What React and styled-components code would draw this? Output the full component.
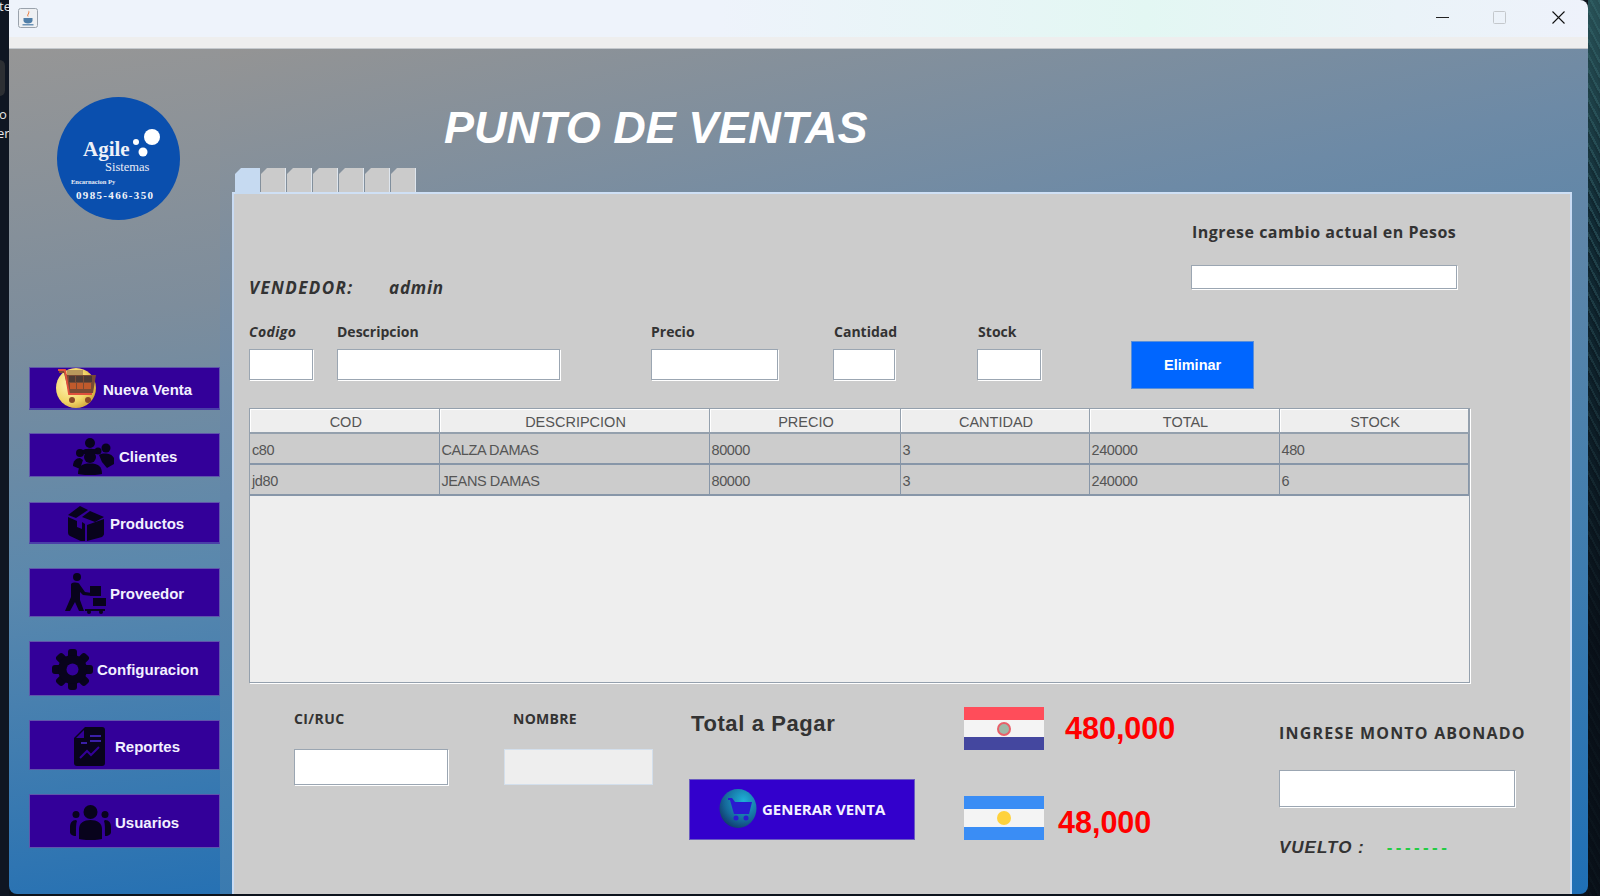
import React from "react";
import styled, { createGlobalStyle } from "styled-components";

const GlobalStyle = createGlobalStyle`
  html, body {
    margin: 0;
    padding: 0;
    background: #0d1620;
    overflow: hidden;
  }
  * {
    box-sizing: border-box;
  }
`;

const Desktop = styled.div`
  display: flex;
  width: 1600px;
  height: 896px;
  overflow: hidden;
  background: #0c131c;
`;

const LeftEdge = styled.div`
  position: relative;
  width: 9px;
  height: 896px;
  overflow: hidden;
  background: #0f1622;
  font-family: "Open Sans", sans-serif;
  font-size: 13px;
  color: #e8e8e8;
`;

const EdgeText = styled.span`
  position: absolute;
  left: ${(p) => p.$left}px;
  top: ${(p) => p.$top}px;
  line-height: 16px;
`;

const EdgePill = styled.div`
  position: absolute;
  left: -6px;
  top: 60px;
  width: 11px;
  height: 36px;
  border-radius: 6px;
  background: #2c2f33;
`;

const RightEdge = styled.div`
  width: 12px;
  height: 896px;
  background:
    linear-gradient(180deg, rgba(48, 96, 100, 0.75) 0, rgba(20, 50, 60, 0.4) 220px, rgba(8, 14, 22, 0.9) 640px),
    repeating-linear-gradient(62deg, #0a1a22 0 2px, #2a5058 2px 4px, #0f2630 4px 7px),
    repeating-linear-gradient(-48deg, #08141c 0 3px, #1f3f48 3px 5px);
`;

const Window = styled.div`
  display: flex;
  flex-direction: column;
  width: 1579px;
  height: 894px;
  overflow: hidden;
  border-radius: 0 8px 8px 8px;
`;

const TitleBar = styled.div`
  display: flex;
  align-items: center;
  justify-content: space-between;
  height: 37px;
  padding: 0 0 2px 9px;
  background: linear-gradient(90deg, #eef3fb 0%, #eef3fb 45%, #e3f7f3 72%, #eaf3f8 88%, #eef2fb 100%);
`;

const WindowControls = styled.div`
  display: flex;
  align-items: center;
  padding-right: 23px;
`;

const ControlSlot = styled.span`
  display: flex;
  margin-left: ${(p) => p.$ml}px;
`;

const MenuStrip = styled.div`
  height: 12px;
  background: #eeeeee;
  border-bottom: 1px solid #c4c8cc;
`;

const Body = styled.div`
  display: flex;
  flex: 1;
  min-height: 0;
`;

const Sidebar = styled.aside`
  display: flex;
  flex-direction: column;
  width: 211px;
  padding: 48px 0 0 20px;
  background: linear-gradient(172deg, #969696 0%, #7d8d9c 32%, #5a88ad 62%, #2671b3 100%);
`;

const LogoWrap = styled.div`
  width: 123px;
  height: 123px;
  margin-left: 28px;
`;

const SideButton = styled.div`
  display: flex;
  align-items: center;
  flex-shrink: 0;
  width: 191px;
  height: ${(p) => p.$h}px;
  margin-top: ${(p) => p.$mt}px;
  padding: 2px 0 0 ${(p) => p.$pl}px;
  gap: ${(p) => p.$gap}px;
  background: #330099;
  border: 1px solid #5f55ab;
  border-bottom: ${(p) => (p.$underline ? "2px solid #4a3fa8" : "1px solid #5f55ab")};
  color: #f2f0ff;
  font-family: "Liberation Sans", sans-serif;
  font-size: 15px;
  font-weight: 700;
  white-space: nowrap;
`;

const Content = styled.main`
  display: flex;
  flex: 1;
  flex-direction: column;
  min-width: 0;
  background: linear-gradient(168deg, #949494 0%, #6d8aa6 30%, #4880ad 62%, #1f6fb5 100%);
`;

const AppTitle = styled.h1`
  height: 119px;
  margin: 0;
  padding: 54px 0 0 224px;
  color: #ffffff;
  font-family: "Liberation Sans", sans-serif;
  font-size: 45px;
  font-style: italic;
  font-weight: 700;
  line-height: 50px;
`;

const TabStrip = styled.div`
  display: flex;
  gap: 1px;
  padding-left: 15px;
`;

const Tab = styled.div`
  position: relative;
  z-index: 1;
  width: 25px;
  height: ${(p) => (p.$active ? 26 : 24)}px;
  margin-bottom: ${(p) => (p.$active ? -2 : 0)}px;
  background: ${(p) => (p.$active ? "#c6daf1" : "#cbcbcb")};
  border-right: 1px solid ${(p) => (p.$active ? "#c6daf1" : "#dfe6ee")};
  clip-path: polygon(6px 0, 100% 0, 100% 100%, 0 100%, 0 6px);
`;

const TabPanel = styled.section`
  display: flex;
  flex: 1;
  flex-direction: column;
  width: 1340px;
  margin-left: 12px;
  padding-left: 15px;
  background: #cccccc;
  border-top: 2px solid #cfe0f5;
  border-left: 2px solid #c9dbf3;
  border-right: 2px solid #c9dbf3;
`;

const TopRow = styled.div`
  display: flex;
  align-items: flex-end;
  height: 78px;
  margin-top: 28px;
`;

const SellerLabel = styled.span`
  width: ${(p) => p.$w}px;
  color: #333333;
  font-family: "Open Sans", sans-serif;
  font-size: 17px;
  font-style: italic;
  font-weight: 700;
  letter-spacing: ${(p) => p.$spacing}px;
  line-height: 24px;
`;

const RateBlock = styled.div`
  display: flex;
  flex-direction: column;
  align-self: flex-start;
  width: 266px;
  margin-left: 802px;
`;

const RateLabel = styled.label`
  height: 20px;
  padding-left: 1px;
  color: #333333;
  font-family: "Open Sans", sans-serif;
  font-size: 16px;
  font-weight: 700;
  letter-spacing: 0.5px;
  line-height: 20px;
  white-space: nowrap;
`;

const TextInput = styled.input`
  display: block;
  width: ${(p) => p.$w}px;
  height: ${(p) => p.$h}px;
  margin-top: ${(p) => p.$mt}px;
  padding: 0 4px;
  background: ${(p) => (p.disabled ? "#eeeeee" : "#ffffff")};
  border: 1px solid ${(p) => (p.disabled ? "#d3dfec" : "#9ba6b2")};
  box-shadow: ${(p) => (p.disabled ? "none" : "1px 1px 0 #ffffff")};
  border-radius: 0;
  outline: none;
`;

const FieldsRow = styled.div`
  display: flex;
  align-items: flex-start;
  margin-top: 22px;
`;

const Field = styled.div`
  display: flex;
  flex-direction: column;
  margin-left: ${(p) => p.$ml}px;
`;

const FieldLabel = styled.label`
  height: 20px;
  padding-left: ${(p) => p.$pl || 0}px;
  color: #333333;
  font-family: "Open Sans", sans-serif;
  font-size: 14px;
  font-style: ${(p) => (p.$italic ? "italic" : "normal")};
  font-weight: 700;
  letter-spacing: ${(p) => p.$spacing || 0}px;
  line-height: 20px;
  white-space: nowrap;
`;

const DeleteButton = styled.button`
  width: 123px;
  height: 48px;
  margin: 19px 0 0 90px;
  background: #0066ff;
  border: 1px solid #5b8fd8;
  color: #ffffff;
  font-family: "Liberation Sans", sans-serif;
  font-size: 14.5px;
  font-weight: 700;
`;

const TableFrame = styled.div`
  width: 1221px;
  height: 275px;
  margin-top: 19px;
  background: #eeeeee;
  border: 1px solid #94a0ad;
  box-shadow: 1px 1px 0 #ffffff;
`;

const Table = styled.table`
  width: 1218px;
  border-collapse: collapse;
  table-layout: fixed;
  font-family: "Liberation Sans", sans-serif;
  font-size: 14.5px;
  color: #555555;
`;

const Th = styled.th`
  height: 24px;
  padding: 2px 0 0 3px;
  background: #eeeeee;
  border-right: 1px solid #94a0ad;
  border-bottom: 2px solid #94a0ad;
  box-shadow: inset 1px 1px 0 #ffffff;
  font-weight: 400;
  text-align: center;
`;

const Td = styled.td`
  height: 31px;
  padding: 2px 0 0 2px;
  background: #cccccc;
  border-right: 1px solid #8796a8;
  border-bottom: 2px solid #8796a8;
  letter-spacing: -0.4px;
`;

const BottomRow = styled.div`
  display: flex;
  align-items: flex-start;
  padding-top: 24px;
`;

const BottomField = styled.div`
  display: flex;
  flex-direction: column;
  padding-top: 2px;
  margin-left: ${(p) => p.$ml}px;
`;

const TotalColumn = styled.div`
  display: flex;
  flex-direction: column;
  width: 226px;
  margin-left: 36px;
  padding-top: 4px;
`;

const TotalLabel = styled.div`
  height: 26px;
  padding-left: 2px;
  color: #333333;
  font-family: "Liberation Sans", sans-serif;
  font-size: 22px;
  font-weight: 700;
  letter-spacing: 0.6px;
  line-height: 26px;
`;

const GenerateButton = styled.button`
  display: flex;
  align-items: center;
  width: 226px;
  height: 61px;
  margin-top: 42px;
  padding: 0 0 2px 29px;
  gap: 5px;
  background: #3300cc;
  border: 1px solid #6a5cc0;
  color: #f4f2ff;
  font-family: "Open Sans", sans-serif;
  font-size: 15px;
  font-weight: 700;
  white-space: nowrap;
`;

const FlagColumn = styled.div`
  display: flex;
  flex-direction: column;
  width: 214px;
  margin-left: 49px;
  gap: 46px;
`;

const FlagRow = styled.div`
  display: flex;
  align-items: flex-start;
`;

const Flag = styled.div`
  position: relative;
  display: grid;
  grid-template-rows: 13px 1fr 13px;
  flex-shrink: 0;
  width: 80px;
  height: ${(p) => p.$h}px;
`;

const Stripe = styled.div`
  background: ${(p) => p.$color};
`;

const FlagEmblem = styled.span`
  position: absolute;
  left: 33px;
  top: ${(p) => p.$top}px;
  width: 14px;
  height: 14px;
  border-radius: 50%;
  background: ${(p) => p.$bg};
  border: ${(p) => p.$border};
`;

const Amount = styled.span`
  margin: ${(p) => p.$mt}px 0 0 ${(p) => p.$ml}px;
  color: #ff0000;
  font-family: "Liberation Sans", sans-serif;
  font-size: 30.5px;
  font-weight: 700;
  line-height: 36px;
`;

const PayColumn = styled.div`
  display: flex;
  flex-direction: column;
  margin-left: 101px;
  padding-top: 16px;
`;

const PayLabel = styled.label`
  height: 20px;
  color: #333333;
  font-family: "Open Sans", sans-serif;
  font-size: 16px;
  font-weight: 700;
  letter-spacing: 1.2px;
  line-height: 20px;
  white-space: nowrap;
`;

const ChangeRow = styled.div`
  display: flex;
  align-items: center;
  height: 20px;
  margin-top: 31px;
  color: #333333;
  font-family: "Liberation Sans", sans-serif;
  font-size: 17px;
  font-style: italic;
  font-weight: 700;
  letter-spacing: 1px;
`;

const ChangeValue = styled.span`
  margin-left: 22px;
  color: #22cc44;
  font-style: normal;
  letter-spacing: 3.4px;
`;

const AppIcon = () => (
  <svg width="20" height="20" viewBox="0 0 20 20">
    <rect x="0.5" y="0.5" width="19" height="19" rx="2" fill="#eef0f3" stroke="#9aa2ac" />
    <path d="M10.500 2.500c2.500 2.500-1.500 3.500 0 6.500-3-2 1-3.500 0-6.500z" fill="#e8661c" />
    <path d="M5.500 10h9v2.500c0 2-2 3-4.500 3s-4.500-1-4.500-3z" fill="#4f7ea8" />
    <path d="M4.500 16.800h11" stroke="#4f7ea8" strokeWidth="1.200" />
  </svg>
);

const MinimizeIcon = () => (
  <svg width="13" height="13" viewBox="0 0 13 13">
    <path d="M0 6.500h13" stroke="#222" strokeWidth="1" />
  </svg>
);

const MaximizeIcon = () => (
  <svg width="13" height="13" viewBox="0 0 13 13">
    <rect x="0.500" y="0.500" width="12" height="12" rx="1" fill="none" stroke="#c4c8cc" />
  </svg>
);

const CloseIcon = () => (
  <svg width="13" height="13" viewBox="0 0 13 13">
    <path d="M0.500 0.500l12 12M12.500 0.500l-12 12" stroke="#111" strokeWidth="1.100" />
  </svg>
);

const Logo = () => (
  <svg width="123" height="123" viewBox="0 0 123 123">
    <circle cx="61.500" cy="61.500" r="61.500" fill="#0a4fae" />
    <circle cx="95" cy="40" r="8" fill="#fff" />
    <circle cx="86" cy="55" r="4.500" fill="#fff" />
    <circle cx="79" cy="45" r="3" fill="#fff" />
    <text x="26" y="59" fontFamily="Liberation Serif" fontSize="21" fontWeight="700" fill="#eef1f8">Agile</text>
    <text x="48" y="74" fontFamily="Liberation Serif" fontSize="12.500" fill="#e8ecf6">Sistemas</text>
    <text x="14" y="87" fontFamily="Liberation Serif" fontSize="6.500" fontWeight="700" fill="#e8ecf6">Encarnacion Py</text>
    <text x="19" y="102" fontFamily="Liberation Serif" fontSize="11" fontWeight="700" fill="#f2f4fa" textLength="77">0985-466-350</text>
  </svg>
);

const CartBadge = () => (
  <svg width="42" height="42" viewBox="0 0 42 42" style={{ marginTop: -3, overflow: "visible" }}>
    <defs>
      <radialGradient id="goldBall" cx="0.35" cy="0.4" r="0.75">
        <stop offset="0" stopColor="#fff6b8" />
        <stop offset="0.6" stopColor="#f2d66a" />
        <stop offset="1" stopColor="#c89a2a" />
      </radialGradient>
    </defs>
    <circle cx="20" cy="21" r="20" fill="url(#goldBall)" />
    <path d="M11 3h16v6H11z" fill="#b9985c" />
    <path d="M3 4h5l3 4h29l-3 18H13L8 6H3z" fill="#7a4a34" />
    <path d="M13 9h6v6h-6zM20 9h7v6h-7zM28 9h8v6h-8z" fill="#4d3a34" />
    <path d="M14 16h6v6h-6zM21 16h6v6h-6zM28 16h7v6h-7z" fill="#c05a2c" />
    <path d="M2 3h7l4 24h23" fill="none" stroke="#e0503c" strokeWidth="1.800" />
    <circle cx="16" cy="33" r="3" fill="#8a4a28" />
    <circle cx="32" cy="33" r="3" fill="#8a4a28" />
  </svg>
);

const ClientsIcon = () => (
  <svg width="41" height="37" viewBox="0 0 41 37" fill="#08031c">
    <circle cx="17" cy="5" r="5" />
    <circle cx="33" cy="10" r="4.500" />
    <circle cx="7" cy="15" r="4" />
    <circle cx="25" cy="13" r="3.500" />
    <circle cx="17" cy="19" r="6" />
    <path d="M9 13c1-3 15-3 16 0l-2 3H11z" />
    <path d="M26 17c2-2 12-3 15 3v6l-7 4-5-6z" />
    <path d="M0 28c0-5 3-8 7-8l3 2-3 9z" />
    <path d="M5 36c0-8 4-10.500 12-10.500S29 28 29 36c-4 1.500-20 1.500-24 0z" />
  </svg>
);

const BoxIcon = () => (
  <svg width="36" height="35" viewBox="0 0 36 35" fill="#08031c">
    <path d="M12 0l8 4-12 8-8-3z" />
    <path d="M22 5l14 6-9 5-13-5z" />
    <path d="M0 11l9 4v6l5 2v-7l3 2v19L2 30c-1.500-1-2-2-2-4z" />
    <path d="M19 19l17-6v15c0 1-1 2-2 3l-15 4z" />
  </svg>
);

const SupplierIcon = () => (
  <svg width="41" height="41" viewBox="0 0 41 41" fill="#08031c">
    <circle cx="12" cy="4" r="4" />
    <path d="M6 11c2-2 8-2 9 1l5 7 7 1v3l-9-1-3-3v8l4 11h-5l-4-9-5 9H0l6-14z" />
    <path d="M25 13h11v10H25z" />
    <path d="M28 25h13v8H28z" />
    <path d="M20 36h20v2H20z" />
    <circle cx="24" cy="39" r="2" />
    <circle cx="36" cy="39" r="2" />
  </svg>
);

const GearIcon = () => (
  <svg width="41" height="41" viewBox="0 0 41 41">
    {[0, 45, 90, 135].map((a) => (
      <rect key={a} x="16" y="0" width="9" height="41" rx="3" fill="#08031c" transform={`rotate(${a} 20.500 20.500)`} />
    ))}
    <circle cx="20.500" cy="20.500" r="14.500" fill="#08031c" />
    <circle cx="20.500" cy="20.500" r="6" fill="#330099" />
  </svg>
);

const ReportIcon = () => (
  <svg width="31" height="39" viewBox="0 0 31 39">
    <path d="M11 0h17c2 0 3 1 3 3v33c0 2-1 3-3 3H3c-2 0-3-1-3-3V11z" fill="#08031c" />
    <path d="M10 3v8H2z" fill="#330099" />
    <path d="M16 8h11v2H16zM16 13h11v2H16zM7 15h6v2H7z" fill="#3a1fa8" />
    <path d="M6 31l7-7 4 4 8-8" fill="none" stroke="#330099" strokeWidth="2" />
  </svg>
);

const UsersIcon = () => (
  <svg width="41" height="35" viewBox="0 0 41 35" fill="#08031c">
    <circle cx="20.500" cy="7" r="7" />
    <circle cx="6" cy="9.500" r="3.500" />
    <circle cx="35" cy="9.500" r="3.500" />
    <path d="M9 24c0-6 5-9 11.500-9S32 18 32 24v10c-5 1.500-18 1.500-23 0z" />
    <path d="M0 22c0-4 2-7 6-7l1 1c-1 3-1 6-1 15-4 0-6-2-6-4z" />
    <path d="M41 22c0-4-2-7-6-7l-1 1c1 3 1 6 1 15 4 0 6-2 6-4z" />
  </svg>
);

const SaleIcon = () => (
  <svg width="38" height="39" viewBox="0 0 38 39">
    <defs>
      <radialGradient id="saleBall" cx="0.65" cy="0.3" r="0.85">
        <stop offset="0" stopColor="#1fb0d8" />
        <stop offset="0.6" stopColor="#15689a" />
        <stop offset="1" stopColor="#0f2a5c" />
      </radialGradient>
    </defs>
    <ellipse cx="19" cy="19.500" rx="18.500" ry="19.500" fill="url(#saleBall)" />
    <path d="M9 9h4l3 4h17l-3 12H15L11 11H9z" fill="#2a1ad0" />
    <circle cx="17" cy="29" r="2.500" fill="#2a1ad0" />
    <circle cx="27" cy="29" r="2.500" fill="#2a1ad0" />
  </svg>
);

const tabs = [true, false, false, false, false, false, false];

const menu = [
  { label: "Nueva Venta", icon: <CartBadge />, h: 43, mt: 147, pl: 26, gap: 5, underline: true },
  { label: "Clientes", icon: <ClientsIcon />, h: 44, mt: 23, pl: 43, gap: 5 },
  { label: "Productos", icon: <BoxIcon />, h: 42, mt: 25, pl: 38, gap: 6, underline: true },
  { label: "Proveedor", icon: <SupplierIcon />, h: 49, mt: 24, pl: 35, gap: 4 },
  { label: "Configuracion", icon: <GearIcon />, h: 55, mt: 24, pl: 22, gap: 4 },
  { label: "Reportes", icon: <ReportIcon />, h: 50, mt: 24, pl: 44, gap: 10 },
  { label: "Usuarios", icon: <UsersIcon />, h: 54, mt: 24, pl: 40, gap: 4 },
];

const columns = [
  { title: "COD", w: 189 },
  { title: "DESCRIPCION", w: 270 },
  { title: "PRECIO", w: 191 },
  { title: "CANTIDAD", w: 189 },
  { title: "TOTAL", w: 190 },
  { title: "STOCK", w: 189 },
];

const rows = [
  ["c80", "CALZA DAMAS", "80000", "3", "240000", "480"],
  ["jd80", "JEANS DAMAS", "80000", "3", "240000", "6"],
];

const App = () => {
  return (
    <>
      <GlobalStyle />
      <Desktop>
        <LeftEdge>
          <EdgeText $left={-1} $top={-2}>te</EdgeText>
          <EdgePill />
          <EdgeText $left={-1} $top={106}>o</EdgeText>
          <EdgeText $left={-3} $top={125}>er</EdgeText>
        </LeftEdge>
        <Window>
          <TitleBar>
            <AppIcon />
            <WindowControls>
              <MinimizeIcon />
              <ControlSlot $ml={44}>
                <MaximizeIcon />
              </ControlSlot>
              <ControlSlot $ml={46}>
                <CloseIcon />
              </ControlSlot>
            </WindowControls>
          </TitleBar>
          <MenuStrip />
          <Body>
            <Sidebar>
              <LogoWrap>
                <Logo />
              </LogoWrap>
              {menu.map((item) => (
                <SideButton key={item.label} $h={item.h} $mt={item.mt} $pl={item.pl} $gap={item.gap} $underline={item.underline}>
                  {item.icon}
                  {item.label}
                </SideButton>
              ))}
            </Sidebar>
            <Content>
              <AppTitle>PUNTO DE VENTAS</AppTitle>
              <TabStrip>
                {tabs.map((active, i) => (
                  <Tab key={i} $active={active} />
                ))}
              </TabStrip>
              <TabPanel>
                <TopRow>
                  <SellerLabel $w={140} $spacing={1.4}>VENDEDOR:</SellerLabel>
                  <SellerLabel $w={0} $spacing={0.8}>admin</SellerLabel>
                  <RateBlock>
                    <RateLabel>Ingrese cambio actual en Pesos</RateLabel>
                    <TextInput $w={266} $h={24} $mt={23} />
                  </RateBlock>
                </TopRow>
                <FieldsRow>
                  <Field $ml={0}>
                    <FieldLabel $italic $spacing={0.4}>Codigo</FieldLabel>
                    <TextInput $w={64} $h={31} $mt={7} />
                  </Field>
                  <Field $ml={24}>
                    <FieldLabel>Descripcion</FieldLabel>
                    <TextInput $w={223} $h={31} $mt={7} />
                  </Field>
                  <Field $ml={91}>
                    <FieldLabel>Precio</FieldLabel>
                    <TextInput $w={127} $h={31} $mt={7} />
                  </Field>
                  <Field $ml={55}>
                    <FieldLabel $pl={1}>Cantidad</FieldLabel>
                    <TextInput $w={62} $h={31} $mt={7} />
                  </Field>
                  <Field $ml={80}>
                    <FieldLabel $pl={1}>Stock</FieldLabel>
                    <TextInput $w={64} $h={31} $mt={7} />
                  </Field>
                  <DeleteButton>Eliminar</DeleteButton>
                </FieldsRow>
                <TableFrame>
                  <Table>
                    <colgroup>
                      {columns.map((c) => (
                        <col key={c.title} width={c.w} />
                      ))}
                    </colgroup>
                    <thead>
                      <tr>
                        {columns.map((c) => (
                          <Th key={c.title}>{c.title}</Th>
                        ))}
                      </tr>
                    </thead>
                    <tbody>
                      {rows.map((row) => (
                        <tr key={row[0]}>
                          {row.map((cell, i) => (
                            <Td key={i}>{cell}</Td>
                          ))}
                        </tr>
                      ))}
                    </tbody>
                  </Table>
                </TableFrame>
                <BottomRow>
                  <BottomField $ml={45}>
                    <FieldLabel $spacing={0.4}>CI/RUC</FieldLabel>
                    <TextInput $w={154} $h={36} $mt={20} />
                  </BottomField>
                  <BottomField $ml={56}>
                    <FieldLabel $pl={9} $spacing={0.3}>NOMBRE</FieldLabel>
                    <TextInput $w={149} $h={36} $mt={20} disabled />
                  </BottomField>
                  <TotalColumn>
                    <TotalLabel>Total a Pagar</TotalLabel>
                    <GenerateButton>
                      <SaleIcon />
                      GENERAR VENTA
                    </GenerateButton>
                  </TotalColumn>
                  <FlagColumn>
                    <FlagRow>
                      <Flag $h={43}>
                        <Stripe $color="#ff4d5a" />
                        <Stripe $color="#f4f4f4" />
                        <Stripe $color="#44479f" />
                        <FlagEmblem $top={15} $bg="#9fb8a8" $border="2px solid #e8606a" />
                      </Flag>
                      <Amount $ml={21} $mt={3}>480,000</Amount>
                    </FlagRow>
                    <FlagRow>
                      <Flag $h={44}>
                        <Stripe $color="#3a8df5" />
                        <Stripe $color="#f4f4f4" />
                        <Stripe $color="#3a8df5" />
                        <FlagEmblem $top={15} $bg="#ffd23c" $border="none" />
                      </Flag>
                      <Amount $ml={14} $mt={8}>48,000</Amount>
                    </FlagRow>
                  </FlagColumn>
                  <PayColumn>
                    <PayLabel>INGRESE MONTO ABONADO</PayLabel>
                    <TextInput $w={236} $h={37} $mt={27} />
                    <ChangeRow>
                      VUELTO :
                      <ChangeValue>-------</ChangeValue>
                    </ChangeRow>
                  </PayColumn>
                </BottomRow>
              </TabPanel>
            </Content>
          </Body>
        </Window>
        <RightEdge />
      </Desktop>
    </>
  );
};

export default App;
